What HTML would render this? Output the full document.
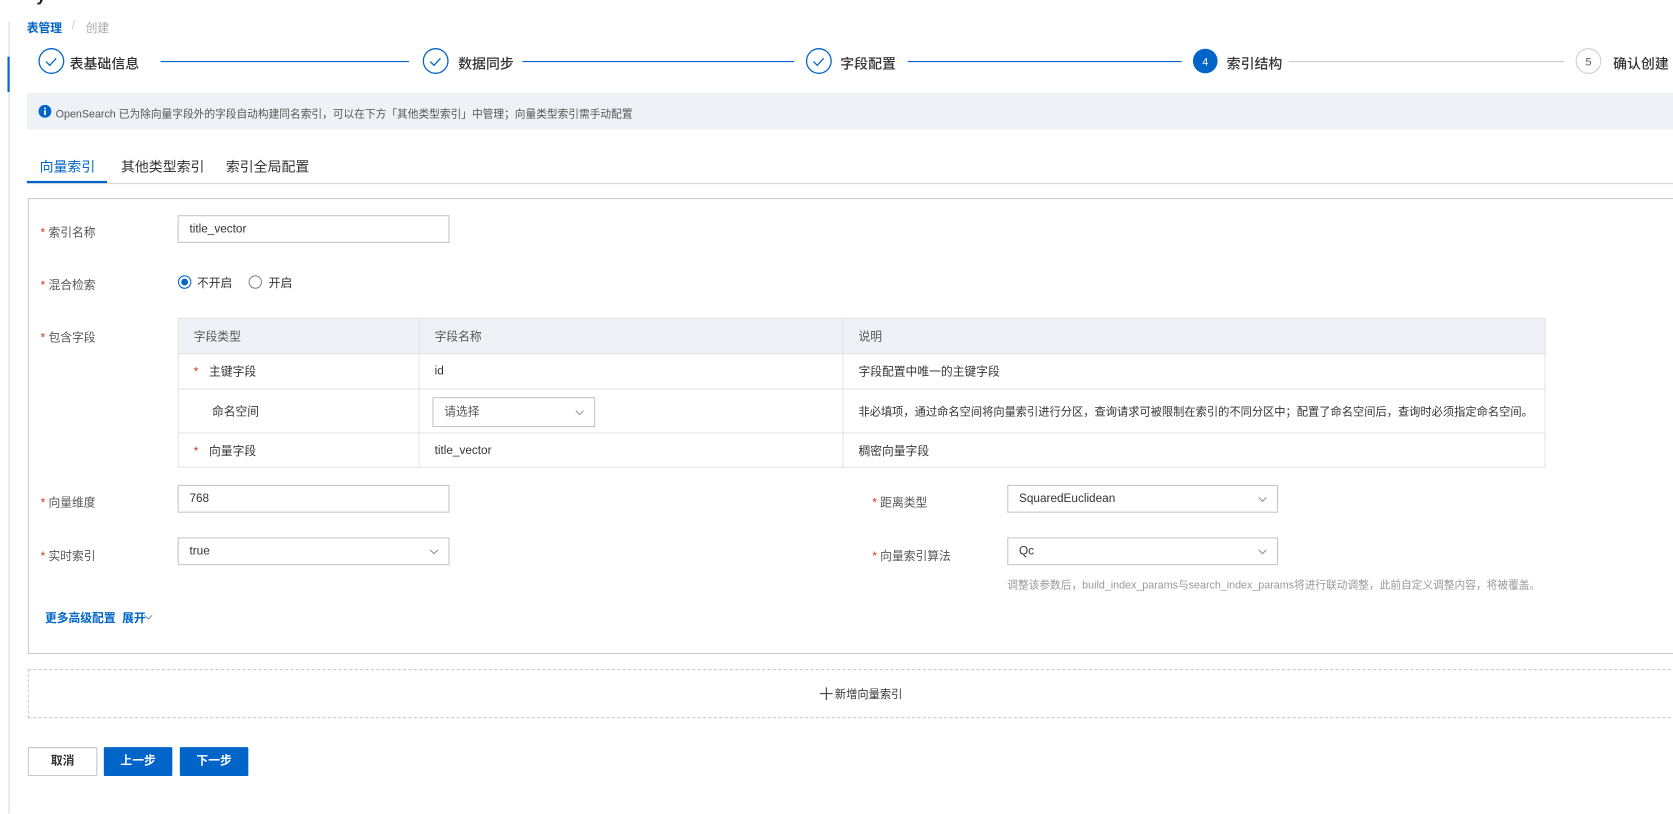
<!DOCTYPE html>
<html><head><meta charset="utf-8"><style>
*{box-sizing:border-box;margin:0;padding:0}
html,body{width:1673px;height:807px;overflow:hidden;background:#fff}
#w{position:absolute;left:0;top:0;width:1563px;height:754px;transform:scale(1.0704);transform-origin:0 0;font-family:"Liberation Sans","Noto Sans CJK SC",sans-serif;color:#333;font-size:11px}
.a{position:absolute;white-space:nowrap}
.st{font-size:13px;color:#333;font-weight:500}
.inp{position:absolute;border:1px solid #c4c6cc;background:#fff;height:26px;padding-left:10px;line-height:24px;font-size:11px;color:#333}
.lab{position:absolute;font-size:11px;color:#555}
.lab b{color:#d93026;font-weight:normal;margin-right:3px}
.chev{position:absolute;right:9px;top:8px;width:9px;height:9px}
table{table-layout:fixed}
td,th{border:1px solid #e3e4e6;font-weight:normal;text-align:left;padding-left:14px;font-size:11px;color:#333}
th{background:#eef1f6;color:#555}
.btn{position:absolute;height:27px;top:698px;font-size:11px;font-weight:bold;text-align:center;line-height:27px;border-radius:1px}
</style></head><body><div id="w">
<div class="a" style="left:8px;top:20px;width:1px;height:740px;background:#d5d7db"></div>
<div class="a" style="left:7px;top:53px;width:2px;height:33px;background:#0064c8"></div>
<div class="a" style="left:34px;top:-12px;font-size:16px;font-weight:bold;color:#222">y</div>
<div class="a" style="left:25px;top:18px;color:#0064c8;font-size:11px;font-weight:bold">表管理</div>
<div class="a" style="left:67px;top:18px;color:#ccc">/</div>
<div class="a" style="left:80px;top:18px;color:#aaa">创建</div>

<svg class="a" style="left:0;top:0" width="1563" height="80">
<g fill="none" stroke="#0064c8" stroke-width="1.2">
<circle cx="48" cy="57" r="11.5"/><path d="M43 57.5l3.5 3.5 6-6.5"/>
<circle cx="407" cy="57" r="11.5"/><path d="M402 57.5l3.5 3.5 6-6.5"/>
<circle cx="765" cy="57" r="11.5"/><path d="M760 57.5l3.5 3.5 6-6.5"/>
</g>
<circle cx="1126" cy="57" r="11.5" fill="#0064c8"/>
<text x="1126" y="61" fill="#fff" font-size="10" text-anchor="middle" font-family="Liberation Sans">4</text>
<circle cx="1484" cy="57" r="11.5" fill="#fff" stroke="#c9ccd1"/>
<text x="1484" y="61" fill="#555" font-size="10" text-anchor="middle" font-family="Liberation Sans">5</text>
<line x1="150" y1="57.5" x2="382" y2="57.5" stroke="#0064c8"/>
<line x1="488" y1="57.5" x2="742" y2="57.5" stroke="#0064c8"/>
<line x1="848" y1="57.5" x2="1104" y2="57.5" stroke="#0064c8"/>
<line x1="1204" y1="57.5" x2="1461" y2="57.5" stroke="#c9ccd1"/>
</svg>
<div class="a st" style="left:65px;top:49px">表基础信息</div>
<div class="a st" style="left:428px;top:49px">数据同步</div>
<div class="a st" style="left:785px;top:49px">字段配置</div>
<div class="a st" style="left:1146px;top:49px">索引结构</div>
<div class="a st" style="left:1507px;top:49px">确认创建</div>

<div class="a" style="left:25px;top:87px;width:1540px;height:34px;background:#eef1f6"></div>
<svg class="a" style="left:36px;top:98px" width="12" height="12"><circle cx="6" cy="6" r="6" fill="#0064c8"/><rect x="5.2" y="5" width="1.6" height="4.5" fill="#fff"/><rect x="5.2" y="2.5" width="1.6" height="1.6" fill="#fff"/></svg>
<div class="a" style="left:52px;top:98px;font-size:10px;color:#555">OpenSearch 已为除向量字段外的字段自动构建同名索引，可以在下方「其他类型索引」中管理；向量类型索引需手动配置</div>

<div class="a" style="left:25px;top:171px;width:1540px;height:1px;background:#d5d7db"></div>
<div class="a" style="left:25px;top:169px;width:75px;height:2px;background:#0064c8"></div>
<div class="a" style="left:37px;top:145px;font-size:13px;color:#0064c8">向量索引</div>
<div class="a" style="left:113px;top:145px;font-size:13px;color:#333">其他类型索引</div>
<div class="a" style="left:211px;top:145px;font-size:13px;color:#333">索引全局配置</div>

<div class="a" style="left:26px;top:185px;width:1540px;height:426px;border:1px solid #c9ccd1;border-right:none"></div>

<div class="lab" style="left:38px;top:209px"><b>*</b>索引名称</div>
<div class="inp" style="left:166px;top:201px;width:254px">title_vector</div>

<div class="lab" style="left:38px;top:258px"><b>*</b>混合检索</div>
<svg class="a" style="left:166px;top:257px" width="13" height="13"><circle cx="6.5" cy="6.5" r="5.8" fill="#fff" stroke="#0064c8"/><circle cx="6.5" cy="6.5" r="3.2" fill="#0064c8"/></svg>
<div class="a" style="left:184px;top:256px;font-size:11px">不开启</div>
<svg class="a" style="left:232px;top:257px" width="13" height="13"><circle cx="6.5" cy="6.5" r="5.8" fill="#fff" stroke="#888"/></svg>
<div class="a" style="left:251px;top:256px;font-size:11px">开启</div>

<div class="lab" style="left:38px;top:307px"><b>*</b>包含字段</div>
<table class="a" style="left:166px;top:297px;width:1278px;border-collapse:collapse">
<tr style="height:33px"><th style="width:225px">字段类型</th><th style="width:396px">字段名称</th><th>说明</th></tr>
<tr style="height:33px"><td><span style="color:#d93026;margin-right:10px">*</span>主键字段</td><td>id</td><td>字段配置中唯一的主键字段</td></tr>
<tr style="height:41px"><td style="padding-left:31px">命名空间</td><td style="position:relative"><div class="inp" style="left:12px;top:7px;width:152px;height:28px;line-height:26px;color:#555">请选择<svg class="chev" style="top:9px" viewBox="0 0 10 10"><path d="M1 3l4 4 4-4" fill="none" stroke="#888"/></svg></div></td><td style="font-size:10.5px">非必填项，通过命名空间将向量索引进行分区，查询请求可被限制在索引的不同分区中；配置了命名空间后，查询时必须指定命名空间。</td></tr>
<tr style="height:32px"><td><span style="color:#d93026;margin-right:10px">*</span>向量字段</td><td>title_vector</td><td>稠密向量字段</td></tr>
</table>

<div class="lab" style="left:38px;top:461px"><b>*</b>向量维度</div>
<div class="inp" style="left:166px;top:453px;width:254px">768</div>
<div class="lab" style="left:815px;top:461px"><b>*</b>距离类型</div>
<div class="inp" style="left:941px;top:453px;width:253px">SquaredEuclidean<svg class="chev" viewBox="0 0 10 10"><path d="M1 3l4 4 4-4" fill="none" stroke="#888"/></svg></div>

<div class="lab" style="left:38px;top:511px"><b>*</b>实时索引</div>
<div class="inp" style="left:166px;top:502px;width:254px">true<svg class="chev" viewBox="0 0 10 10"><path d="M1 3l4 4 4-4" fill="none" stroke="#888"/></svg></div>
<div class="lab" style="left:815px;top:511px"><b>*</b>向量索引算法</div>
<div class="inp" style="left:941px;top:502px;width:253px">Qc<svg class="chev" viewBox="0 0 10 10"><path d="M1 3l4 4 4-4" fill="none" stroke="#888"/></svg></div>
<div class="a" style="left:941px;top:538px;font-size:10px;color:#999">调整该参数后，build_index_params与search_index_params将进行联动调整，此前自定义调整内容，将被覆盖。</div>

<div class="a" style="left:42px;top:569px;font-size:11px;font-weight:bold;color:#0064c8">更多高级配置&nbsp; 展开</div>
<svg class="a" style="left:134px;top:572px" width="9" height="9" viewBox="0 0 10 10"><path d="M1 3l4 4 4-4" fill="none" stroke="#7a8ba0"/></svg>

<div class="a" style="left:26px;top:625px;width:1540px;height:46px;border:1px dashed #c9ccd1;border-right:none"></div>
<svg class="a" style="left:766px;top:642px" width="12" height="12"><path d="M6 0v12M0 6h12" stroke="#333" stroke-width="1"/></svg>
<div class="a" style="left:780px;top:641px;font-size:10.5px;color:#333">新增向量索引</div>

<div class="btn" style="left:26px;width:65px;border:1px solid #c4c6cc;color:#333;background:#fff;line-height:25px">取消</div>
<div class="btn" style="left:97px;width:64px;background:#0064c8;color:#fff">上一步</div>
<div class="btn" style="left:168px;width:64px;background:#0064c8;color:#fff">下一步</div>
</div></body></html>
